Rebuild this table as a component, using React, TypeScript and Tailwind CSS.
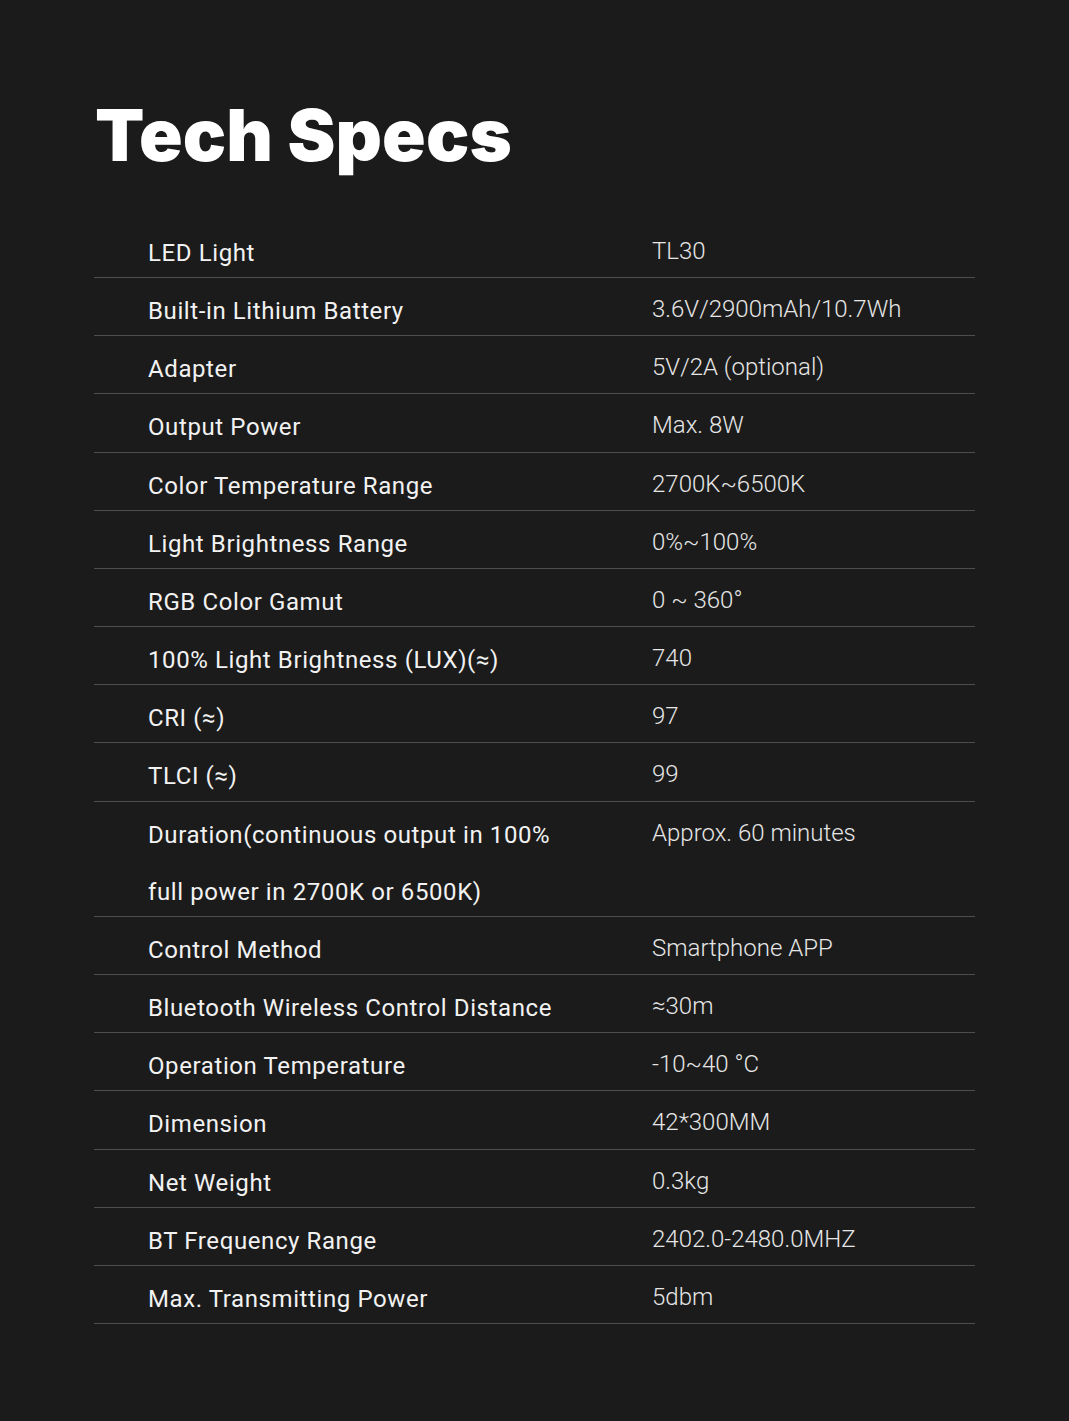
import React from "react";

const rows: [string, string][] = [
  ["LED Light", "TL30"],
  ["Built-in Lithium Battery", "3.6V/2900mAh/10.7Wh"],
  ["Adapter", "5V/2A (optional)"],
  ["Output Power", "Max. 8W"],
  ["Color Temperature Range", "2700K~6500K"],
  ["Light Brightness Range", "0%~100%"],
  ["RGB Color Gamut", "0 ~ 360°"],
  ["100% Light Brightness (LUX)(≈)", "740"],
  ["CRI (≈)", "97"],
  ["TLCI (≈)", "99"],
  ["Duration(continuous output in 100% full power in 2700K or 6500K)", "Approx. 60 minutes"],
  ["Control Method", "Smartphone APP"],
  ["Bluetooth Wireless Control Distance", "≈30m"],
  ["Operation Temperature", "-10~40 °C"],
  ["Dimension", "42*300MM"],
  ["Net Weight", "0.3kg"],
  ["BT Frequency Range", "2402.0-2480.0MHZ"],
  ["Max. Transmitting Power", "5dbm"],
];

export default function App() {
  return (
    <div className="min-h-[1421px] w-full bg-[#1b1b1b] pt-[93px]">
      <h1
        className="ml-[95px] text-[72px] leading-[84px] tracking-[0.1px] text-white"
        style={{ fontFamily: "Inter, 'Liberation Sans', sans-serif", fontWeight: 900 }}
      >
        Tech Specs
      </h1>
      <div className="ml-[94px] mt-[43px] w-[881px]">
        {rows.map(([k, v], i) => (
          <div
            key={i}
            className="grid grid-cols-[558px_1fr] border-b border-[#4d4d4d] leading-[57.15px]"
          >
            <div
              className="translate-y-[5px] pl-[54px] pr-[70px] text-[24px] font-normal tracking-[0.6px] text-[#f2f2f2]"
              style={{ fontFamily: "Roboto, 'Noto Sans', sans-serif" }}
            >
              {k}
            </div>
            <div
              className="translate-y-[3px] text-[24px] font-light tracking-[0px] text-[#e6e6e6]"
              style={{ fontFamily: "Roboto, 'Noto Sans', sans-serif" }}
            >
              {v}
            </div>
          </div>
        ))}
      </div>
    </div>
  );
}
